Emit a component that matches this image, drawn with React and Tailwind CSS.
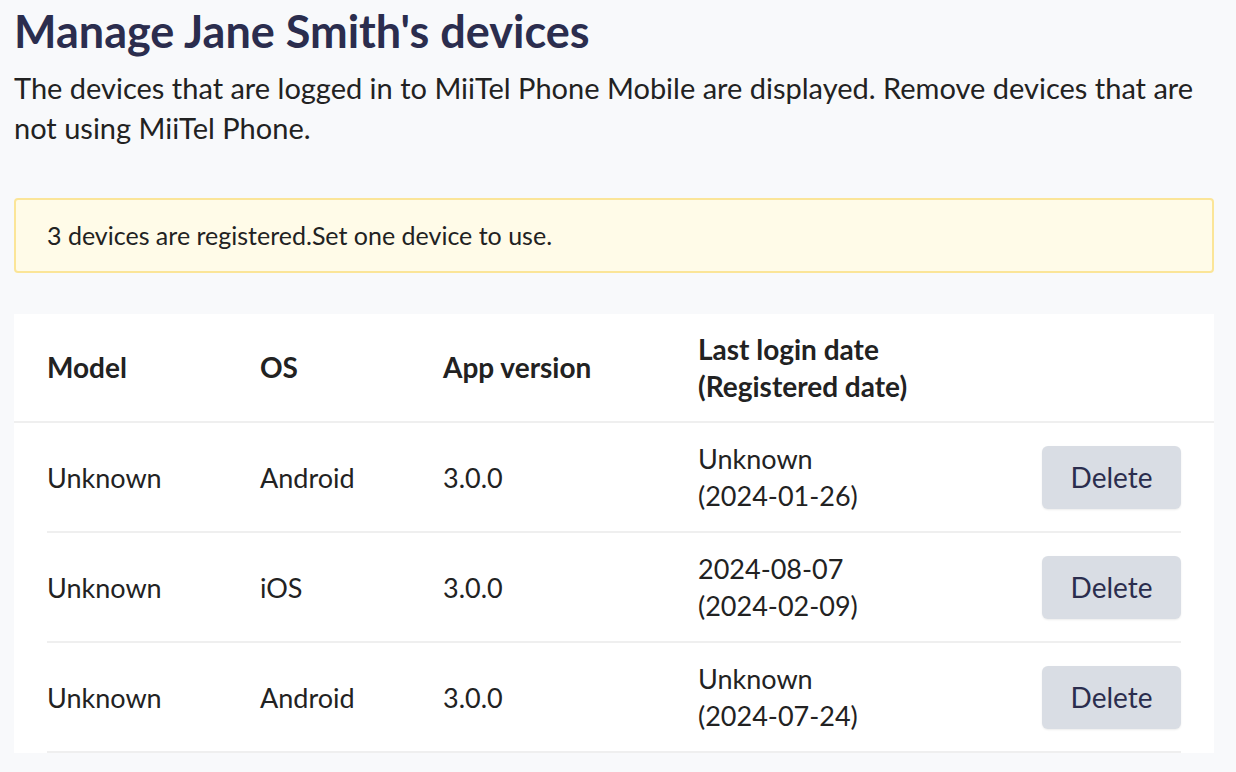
import React from "react";

const rows = [
  { model: "Unknown", os: "Android", ver: "3.0.0", last: "Unknown", reg: "(2024-01-26)" },
  { model: "Unknown", os: "iOS", ver: "3.0.0", last: "2024-08-07", reg: "(2024-02-09)" },
  { model: "Unknown", os: "Android", ver: "3.0.0", last: "Unknown", reg: "(2024-07-24)" },
];

export default function App() {
  return (
    <div
      className="min-h-[772px] w-[1236px] bg-[#f8f9fb] px-[14px] pt-[4px] text-[#222222]"
      style={{ fontFamily: "Lato, 'Noto Sans', sans-serif" }}
    >
      <h1 className="text-[45px] font-bold leading-[54px] text-[#2b2d4e]">
        Manage Jane Smith's devices
      </h1>
      <p className="mt-[10px] w-[1200px] text-[29px] leading-[40px] text-[#222222]">
        The devices that are logged in to MiiTel Phone Mobile are displayed. Remove devices that are not using MiiTel Phone.
      </p>
      <div className="mt-[50px] flex h-[75px] w-[1200px] items-center rounded-[4px] border-2 border-[#fbe598] bg-[#fffbe8] px-[31px] text-[25px] text-[#222222]">
        3 devices are registered.Set one device to use.
      </div>
      <div className="mt-[41px] w-[1200px] bg-white">
        <div className="grid h-[109px] grid-cols-[213px_183px_255px_1fr] items-center border-b-2 border-[#efefef] px-[33px] text-[28px] font-bold leading-[37px]">
          <div>Model</div>
          <div>OS</div>
          <div>App version</div>
          <div>
            Last login date
            <br />
            (Registered date)
          </div>
        </div>
        {rows.map((r, i) => (
          <div
            key={i}
            className="mx-[33px] grid h-[110px] grid-cols-[213px_183px_255px_1fr_auto] items-center border-b-2 border-[#efefef] text-[27px] leading-[37px]"
          >
            <div>{r.model}</div>
            <div>{r.os}</div>
            <div>{r.ver}</div>
            <div>
              {r.last}
              <br />
              {r.reg}
            </div>
            <button className="h-[63px] w-[139px] rounded-[6px] bg-[#d9dde4] text-[28px] text-[#2b2d4e] shadow-[0_1px_2px_rgba(0,0,0,0.08)]">
              Delete
            </button>
          </div>
        ))}
      </div>
    </div>
  );
}
